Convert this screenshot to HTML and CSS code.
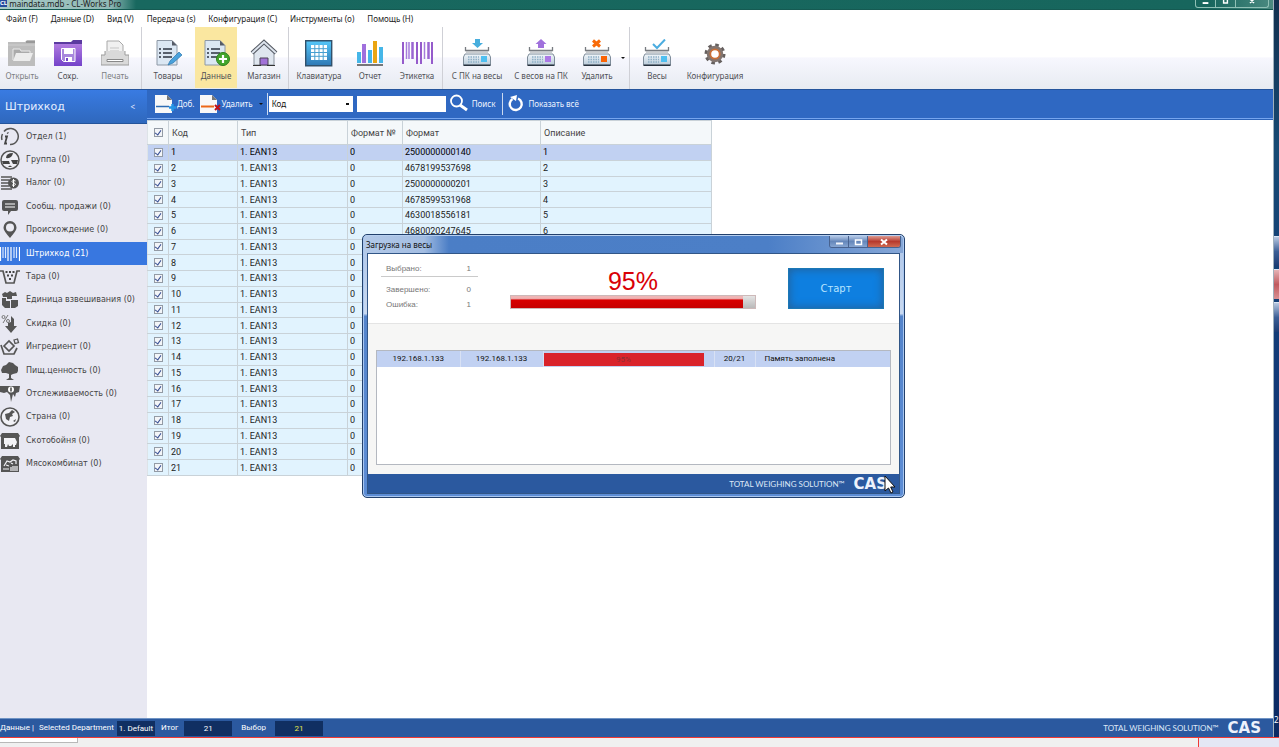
FILE: index.html
```html
<!DOCTYPE html>
<html lang="ru">
<head>
<meta charset="utf-8">
<title>maindata.mdb - CL-Works Pro</title>
<link rel="stylesheet" href="styles.css">
</head>
<body>
<svg class="defs" aria-hidden="true">
  <defs>
    <linearGradient id="g-purple" x1="0" y1="0" x2="0" y2="1"><stop offset="0" stop-color="#b07be0"/><stop offset="1" stop-color="#7443c9"/></linearGradient>
    <linearGradient id="g-blue" x1="0" y1="0" x2="0" y2="1"><stop offset="0" stop-color="#56c8fa"/><stop offset="1" stop-color="#2f78b4"/></linearGradient>
    <linearGradient id="g-body" x1="0" y1="0" x2="0" y2="1"><stop offset="0" stop-color="#f2f7fb"/><stop offset="1" stop-color="#b9cad8"/></linearGradient>
    <symbol id="sheet" viewBox="0 0 28 28">
      <path d="M3 1.500h15l5 5V26H3z" fill="#dbe7f3" stroke="#8d98a5"/>
      <path d="M18 1.500v5h5z" fill="#555b66"/>
      <path d="M5 10h2m2 0h9M5 14h2m2 0h9M5 18h2m2 0h9" stroke="#2c3542" stroke-width="1.500"/>
    </symbol>
    <symbol id="scale" viewBox="0 0 28 28">
      <path d="M2.500 8v3.500h23V8" fill="none" stroke="#777b80" stroke-width="1.300"/>
      <path d="M3 13h22" stroke="#b9bcc0" stroke-width="1.500"/>
      <path d="M2 15h24l1.500 3v8H.500v-8z" fill="url(#g-body)" stroke="#7f8d9a"/>
      <path d="M.500 26.300h27" stroke="#26303c" stroke-width="1.400"/>
      <path d="M5 18h11M5 20.500h11M5 23h11" stroke="#8fb0c6" stroke-width="1.600" stroke-dasharray="1.500 1"/>
    </symbol>
  </defs>
</svg>

<div class="desktop">
  <div class="app">
    <header class="titlebar">
      <span class="app-icon">CL</span>
      <span class="title">maindata.mdb - CL-Works Pro</span>
      <div class="win-controls">
        <button aria-label="Свернуть"><svg viewBox="0 0 20 8"><path d="M7 3h6" stroke="#fff" stroke-width="2"/></svg></button>
        <button aria-label="Развернуть"><svg viewBox="0 0 20 8"><path d="M8-2h4v5H8z" fill="none" stroke="#fff" stroke-width="1.500"/></svg></button>
        <button class="wide" aria-label="Закрыть"><svg viewBox="0 0 20 8"><path d="M8 3l4-4m0 4L8-1" stroke="#fff" stroke-width="1.500"/></svg></button>
      </div>
    </header>

    <nav class="menu">
      <button>Файл (F)</button><button>Данные (D)</button><button>Вид (V)</button><button>Передача (s)</button><button>Конфигурация (C)</button><button>Инструменты (o)</button><button>Помощь (H)</button>
    </nav>

    <div class="ribbon">
      <div class="group g-file">
        <button><svg viewBox="0 0 28 28"><path d="M0 3h17l2-2h8v26H0z" fill="#bdbdbd"/><path d="M18 2h9v2h-9z" fill="#999"/><path d="M0 6h27" stroke="#cfcfcf"/><path d="M5 21V10h7l1 2h9v3" fill="#aaa" stroke="#e9e9e9"/><path d="M8 14h17l-3 8H5z" fill="#ececec"/></svg>Открыть</button>
        <button class="on-text"><svg viewBox="0 0 28 28"><path d="M0 3h17l2-2h9v4H0z" fill="#5b3aa0"/><path d="M0 5h28v22H0z" fill="url(#g-purple)"/><path d="M7.500 9.500H21V22.500H9.500l-2-2z" fill="#a887dd" stroke="#fff"/><path d="M10 10h9v5h-9z" fill="#fff"/><path d="M11 18h7v4h-7z" fill="#fff"/><path d="M12 19h2v3h-2z" fill="#7443c9"/></svg>Сохр.</button>
        <button><svg viewBox="0 0 28 28"><path d="M6 16V2h12l4 4v10z" fill="#f0f0f0" stroke="#a8a8a8"/><path d="M9 9h9M9 12h9" stroke="#c5c5c5"/><path d="M4 12v4H0v10h28V16h-4v-4" fill="#d9d9d9" stroke="#9c9c9c"/><path d="M6 20.500h16v2H6z" fill="#fff" stroke="#888"/></svg>Печать</button>
      </div>
      <div class="group g-data">
        <button class="on-text"><svg viewBox="0 0 28 28"><use href="#sheet"/><path d="M14 26l2-4 9-9 3 3-9 8z" fill="#4aa2dc" stroke="#2c77ad" stroke-width=".700"/></svg>Товары</button>
        <button class="on-text active"><svg viewBox="0 0 28 28"><use href="#sheet"/><circle cx="21" cy="20" r="6.500" fill="#43a52c" stroke="#2d7f1c"/><path d="M21 16v8M17 20h8" stroke="#fff" stroke-width="2.200"/></svg>Данные</button>
        <button class="on-text"><svg viewBox="0 0 28 28"><path d="M4 13L14 4l10 9v13H4z" fill="#dfe6ef" stroke="#8a929d"/><path d="M2 14L14 3l12 11" fill="none" stroke="#545962" stroke-width="4"/><path d="M2 14L14 3l12 11" fill="none" stroke="#dde4ed" stroke-width="2"/><path d="M10 26v-7h8v7z" fill="#a272d8" stroke="#4a4355"/><path d="M3 26.500h8m6 0h8" stroke="#333"/></svg>Магазин</button>
      </div>
      <div class="group g-view">
        <button class="on-text"><svg viewBox="0 0 28 28"><path d="M.700 1.700h26v25H.700z" fill="url(#g-blue)" stroke="#31516b" stroke-width="1.400"/><path d="M6 6h16v15H6z" fill="#fff"/><path d="M9.800 6v15M14 6v15M18.200 6v15M6 9.700h16M6 13.500h16M6 17.300h16" stroke="#479fd0"/></svg>Клавиатура</button>
        <button class="on-text"><svg viewBox="0 0 28 28"><path d="M1 13h4v11H1z" fill="#45b6e8"/><path d="M6 5h4v19H6z" fill="#a070dd"/><path d="M12 11h4v13h-4z" fill="#45b6e8"/><path d="M17 2h4v22h-4z" fill="#eaa511"/><path d="M23 8h4v16h-4z" fill="#45b6e8"/><path d="M1 26h26" stroke="#222" stroke-width="1.200"/></svg>Отчет</button>
        <button class="on-text"><svg class="wide-icon" viewBox="0 0 31 28"><path d="M1 3v22M15 3v22M19 3v22M30 3v22" stroke="#955bcb" stroke-width="2"/><path d="M4.500 3v17M7 3v17M22.500 3v17" stroke="#a57bdb" stroke-width="1.500"/><path d="M10.500 3v17M26.500 3v17" stroke="#9a66d2" stroke-width="2.500"/></svg>Этикетка</button>
      </div>
      <div class="group g-send">
        <button class="on-text"><svg viewBox="0 0 28 28"><use href="#scale"/><path d="M12 0h5v4h3l-5.500 5L9 4h3z" fill="#48aedd"/><path d="M18 17h6v6h-6z" fill="#50bff0"/></svg>С ПК на весы</button>
        <button class="on-text"><svg viewBox="0 0 28 28"><use href="#scale"/><path d="M14 0l5.500 5H17v4h-6V5H8.500z" fill="#a071dc"/><path d="M18 17h6v6h-6z" fill="#ab78e5"/></svg>С весов на ПК</button>
        <button class="on-text"><svg viewBox="0 0 28 28"><use href="#scale"/><path d="M10 1.500l7 6m0-6l-7 6" stroke="#f86a08" stroke-width="3"/><path d="M18 17h6v6h-6z" fill="#fa6406"/></svg>Удалить</button>
        <button class="caret" aria-label="Варианты удаления"></button>
      </div>
      <div class="group g-conf">
        <button class="on-text"><svg viewBox="0 0 28 28"><use href="#scale"/><path d="M10 5l4 4L22 .500" fill="none" stroke="#4cade0" stroke-width="2"/><path d="M18 17h6v6h-6z" fill="#50bff0"/></svg>Весы</button>
        <button class="on-text"><svg viewBox="0 0 28 28"><circle cx="14" cy="15" r="9" fill="none" stroke="#65605f" stroke-width="3" stroke-dasharray="3.530"/><circle cx="14" cy="15" r="6" fill="#fff" stroke="#827570" stroke-width="4.500"/><circle cx="14" cy="15" r="4.700" fill="#fff" stroke="#c96f38" stroke-width="1.800"/></svg>Конфигурация</button>
      </div>
    </div>

    <div class="work">
      <aside class="sidebar">
        <div class="side-head"><h1>Штрихкод</h1><button aria-label="Свернуть панель">&lt;</button></div>
        <ul class="side-list">
          <li><a href="#"><svg viewBox="0 0 20 20"><path d="M4 4.500A8 8 0 1 1 10 17.500M2.500 7a8 8 0 0 0-.500 6" fill="none" stroke="#555" stroke-width="1.500"/><path d="M5 9.500h2l-2 7h2M7.500 5.500l.500 1" fill="none" stroke="#444" stroke-width="1.800"/></svg>Отдел (1)</a></li>
          <li><a href="#"><svg viewBox="0 0 20 20"><circle cx="10" cy="10" r="9" fill="#eeeef4" stroke="#555" stroke-width="1.500"/><path d="M6 8q0-5 7-5-1 6-7 5zM2 11h7l1 3H3zM11 10h7l-1 4h-4zM8 17q2-3 4 0z" fill="#444"/></svg>Группа (0)</a></li>
          <li><a href="#"><svg viewBox="0 0 20 20"><path d="M1 4h11M1 7h8M1 10h8M1 13h8M1 16h11" stroke="#555" stroke-width="1.600"/><circle cx="13.500" cy="10" r="5.500" fill="#555"/><path d="M15.500 8q-3.500-1.500-3.500.500c0 1.500 3.500 1 3.500 3q-1 1.500-3.500.500M13.500 6v8" fill="none" stroke="#fff"/></svg>Налог (0)</a></li>
          <li><a href="#"><svg viewBox="0 0 20 20"><path d="M4 3h12q2 0 2 2v7q0 2-2 2h-5l-3 4v-4H4q-2 0-2-2V5q0-2 2-2z" fill="#555"/><path d="M5 7h10M5 10h10" stroke="#fff" stroke-width="1.200"/></svg>Сообщ. продажи (0)</a></li>
          <li><a href="#"><svg viewBox="0 0 20 20"><path d="M10 18C6 13 3.500 10.500 3.500 7.500a6.500 6.500 0 0 1 13 0C16.500 10.500 14 13 10 18z" fill="#555"/><circle cx="10" cy="7.500" r="4" fill="#ebebf3"/></svg>Происхождение (0)</a></li>
          <li><a href="#" class="current" aria-current="page"><svg viewBox="0 0 20 20"><path d="M.500 3v14M8 3v14M11 3v14M19.500 3v14" stroke="#fff" stroke-width="1.200"/><path d="M3 3v11M5.500 3v11M14 3v11M16.500 3v11" stroke="#dce9ff" stroke-width="1.200"/></svg>Штрихкод (21)</a></li>
          <li><a href="#"><svg viewBox="0 0 20 20"><path d="M0 4h3l3 12h8l3-12h3" fill="none" stroke="#555" stroke-width="1.700"/><path d="M5.500 5h2m1.500 0h2m1.500 0h2M7 8.500h2m2 0h2M9 12h2" stroke="#444" stroke-width="2"/></svg>Тара (0)</a></li>
          <li><a href="#"><svg viewBox="0 0 20 20"><path d="M2 4l3-2 2 1 3-2 3 2 3-1 1 4h-5v3H7V7H3z" fill="#555"/><path d="M2 8h4v3h4v7H5l-3-3z" fill="#555"/><path d="M11 10h7v6l-3 2h-4z" fill="#555"/></svg>Единица взвешивания (0)</a></li>
          <li><a href="#"><svg viewBox="0 0 20 20"><circle cx="3.500" cy="3" r="1.500" fill="none" stroke="#777"/><circle cx="8" cy="7" r="1.500" fill="none" stroke="#777"/><path d="M8 1L3 9" stroke="#777"/><path d="M5 12h3V9l3-1V2l3 3v7h3l-6 7z" fill="#555"/></svg>Скидка (0)</a></li>
          <li><a href="#"><svg viewBox="0 0 20 20"><path d="M1 8l3 9h10l3-6M4 9l5-5 5 5-5 5z" fill="none" stroke="#555" stroke-width="1.700"/><path d="M14 3l3.500-1 1 3.500-3.500 1z" fill="none" stroke="#555" stroke-width="1.300"/></svg>Ингредиент (0)</a></li>
          <li><a href="#"><svg viewBox="0 0 20 20"><path d="M1 9l2-4 3-1 3-3 4 1 2 2 3 2v4l-1 2-4 1-2 1v3l3 2H6l3-2v-4l-3-1-4 0z" fill="#555"/></svg>Пищ.ценность (0)</a></li>
          <li><a href="#"><svg viewBox="0 0 20 20"><path d="M0 2h20l-1 6-3 1-1 4-2-3-2 8-1-7-3-3-3 1-4-1z" fill="#555"/><circle cx="11" cy="5.500" r="3" fill="#fff"/><path d="M11 3.500v4" stroke="#444" stroke-width="1.500"/></svg>Отслеживаемость (0)</a></li>
          <li><a href="#"><svg viewBox="0 0 20 20"><circle cx="10" cy="10" r="9" fill="#f1f1f6" stroke="#555" stroke-width="1.600"/><path d="M5 7l4-1 3-3 3 2-3 2 1 2-3 1-1 4-3-2zM13 14l3-2-1 3z" fill="#555"/></svg>Страна (0)</a></li>
          <li><a href="#"><svg viewBox="0 0 20 20"><path d="M0 5l2-3h16l2 3-1 1v12H1V6z" fill="#555"/><path d="M4 7h11l2 4-1 3h-1v2h-2v-3l-2 2H9l-1-2-1 3H5v-3H4z" fill="#f3f3f7"/></svg>Скотобойня (0)</a></li>
          <li><a href="#"><svg viewBox="0 0 20 20"><path d="M0 5l2-3h16l2 3-1 1v12H1V6z" fill="#555"/><path d="M4 12l3-5 3 1 3-2 3 1v3M3 15h6m2-2v4m2-5v5m2-5v5m2-5v5M6 11l3 1m2-3l2 1" fill="none" stroke="#f3f3f7" stroke-width="1.200"/></svg>Мясокомбинат (0)</a></li>
        </ul>
      </aside>

      <main class="main">
        <div class="toolbar">
          <button class="tool"><svg viewBox="0 0 22 20"><path d="M1 1h12l5 5v13H1z" fill="#f8f8f8"/><path d="M13 1v5h5z" fill="#777"/><path d="M2 12.500h13" stroke="#2f6cb3" stroke-width="1.500"/><path d="M18.500 10v7m-3.500-3.500h7" stroke="#2495e6" stroke-width="2.500"/></svg>Доб.</button>
          <button class="tool"><svg viewBox="0 0 22 20"><path d="M1 1h12l5 5v13H1z" fill="#f8f8f8"/><path d="M13 1v5h5z" fill="#777"/><path d="M2 12.500h13" stroke="#ed6818" stroke-width="2"/><path d="M16 11l5 5m0-5l-5 5" stroke="#bd0e18" stroke-width="2"/></svg>Удалить<span class="arrow"></span></button>
          <span class="divider"></span>
          <select aria-label="Поле поиска"><option>Код</option></select>
          <input class="search" type="text" aria-label="Строка поиска">
          <button class="tool find"><svg viewBox="0 0 20 20"><circle cx="7.500" cy="7" r="5.500" fill="none" stroke="#fff" stroke-width="1.800"/><path d="M11 11l7 5" stroke="#fff" stroke-width="3"/></svg>Поиск</button>
          <span class="divider"></span>
          <button class="tool all"><svg viewBox="0 0 18 20"><path d="M11 4.500a6 6 0 1 1-5.500.500" fill="none" stroke="#fff" stroke-width="2.400"/><path d="M3 3l7-2-1 6z" fill="#fff"/></svg>Показать всё</button>
        </div>

        <table class="grid">
          <colgroup><col class="c-check"><col class="c-code"><col class="c-type"><col class="c-num"><col class="c-format"><col class="c-desc"></colgroup>
          <thead><tr><th><input type="checkbox" checked aria-label="Выбрать все"></th><th>Код</th><th>Тип</th><th>Формат №</th><th>Формат</th><th>Описание</th></tr></thead>
          <tbody>
            <tr class="selected"><td><input type="checkbox" checked aria-label="Строка 1"></td><td>1</td><td>1. EAN13</td><td>0</td><td>2500000000140</td><td>1</td></tr>
            <tr><td><input type="checkbox" checked aria-label="Строка 2"></td><td>2</td><td>1. EAN13</td><td>0</td><td>4678199537698</td><td>2</td></tr>
            <tr><td><input type="checkbox" checked aria-label="Строка 3"></td><td>3</td><td>1. EAN13</td><td>0</td><td>2500000000201</td><td>3</td></tr>
            <tr><td><input type="checkbox" checked aria-label="Строка 4"></td><td>4</td><td>1. EAN13</td><td>0</td><td>4678599531968</td><td>4</td></tr>
            <tr><td><input type="checkbox" checked aria-label="Строка 5"></td><td>5</td><td>1. EAN13</td><td>0</td><td>4630018556181</td><td>5</td></tr>
            <tr><td><input type="checkbox" checked aria-label="Строка 6"></td><td>6</td><td>1. EAN13</td><td>0</td><td>4680020247645</td><td>6</td></tr>
            <tr><td><input type="checkbox" checked aria-label="Строка 7"></td><td>7</td><td>1. EAN13</td><td>0</td><td></td><td></td></tr>
            <tr><td><input type="checkbox" checked aria-label="Строка 8"></td><td>8</td><td>1. EAN13</td><td>0</td><td></td><td></td></tr>
            <tr><td><input type="checkbox" checked aria-label="Строка 9"></td><td>9</td><td>1. EAN13</td><td>0</td><td></td><td></td></tr>
            <tr><td><input type="checkbox" checked aria-label="Строка 10"></td><td>10</td><td>1. EAN13</td><td>0</td><td></td><td></td></tr>
            <tr><td><input type="checkbox" checked aria-label="Строка 11"></td><td>11</td><td>1. EAN13</td><td>0</td><td></td><td></td></tr>
            <tr><td><input type="checkbox" checked aria-label="Строка 12"></td><td>12</td><td>1. EAN13</td><td>0</td><td></td><td></td></tr>
            <tr><td><input type="checkbox" checked aria-label="Строка 13"></td><td>13</td><td>1. EAN13</td><td>0</td><td></td><td></td></tr>
            <tr><td><input type="checkbox" checked aria-label="Строка 14"></td><td>14</td><td>1. EAN13</td><td>0</td><td></td><td></td></tr>
            <tr><td><input type="checkbox" checked aria-label="Строка 15"></td><td>15</td><td>1. EAN13</td><td>0</td><td></td><td></td></tr>
            <tr><td><input type="checkbox" checked aria-label="Строка 16"></td><td>16</td><td>1. EAN13</td><td>0</td><td></td><td></td></tr>
            <tr><td><input type="checkbox" checked aria-label="Строка 17"></td><td>17</td><td>1. EAN13</td><td>0</td><td></td><td></td></tr>
            <tr><td><input type="checkbox" checked aria-label="Строка 18"></td><td>18</td><td>1. EAN13</td><td>0</td><td></td><td></td></tr>
            <tr><td><input type="checkbox" checked aria-label="Строка 19"></td><td>19</td><td>1. EAN13</td><td>0</td><td></td><td></td></tr>
            <tr><td><input type="checkbox" checked aria-label="Строка 20"></td><td>20</td><td>1. EAN13</td><td>0</td><td></td><td></td></tr>
            <tr><td><input type="checkbox" checked aria-label="Строка 21"></td><td>21</td><td>1. EAN13</td><td>0</td><td></td><td></td></tr>
          </tbody>
        </table>
      </main>
    </div>

    <footer class="status">
      <span>Данные |</span><span class="dept">Selected Department</span><span class="value">1. Default</span>
      <span class="label">Итог</span><span class="value box">21</span>
      <span class="label">Выбор</span><span class="value box yellow">21</span>
      <span class="slogan">TOTAL WEIGHING SOLUTION™</span><span class="brand">CAS</span>
    </footer>
  </div>
  <div class="side-desktop"><i></i><i class="red"></i><i></i><span>2</span></div>
</div>
<div class="taskbar"><span class="tab"></span><span class="tray"></span></div>

<section class="dialog" role="dialog" aria-labelledby="dlg-title">
  <header class="dlg-title">
    <h2 id="dlg-title">Загрузка на весы</h2>
    <div class="dlg-controls">
      <button aria-label="Свернуть"><svg viewBox="0 0 18 12"><path d="M6 7.500h7" stroke="#f3f6fb" stroke-width="2"/></svg></button>
      <button aria-label="Развернуть"><svg viewBox="0 0 18 12"><path d="M6.500 4h6v4.500h-6z" fill="none" stroke="#fff" stroke-width="1.500"/></svg></button>
      <button class="close" aria-label="Закрыть"><svg viewBox="0 0 18 12"><path d="M6 3.500l6 5m0-5l-6 5" stroke="#fff" stroke-width="2"/></svg></button>
    </div>
  </header>
  <div class="dlg-body">
    <div class="summary">
      <dl>
        <div class="first"><dt>Выбрано:</dt><dd>1</dd></div>
        <div><dt>Завершено:</dt><dd>0</dd></div>
        <div><dt>Ошибка:</dt><dd>1</dd></div>
      </dl>
      <div class="total"><strong>95%</strong><div class="bar"><div class="fill" style="width:95%"></div></div></div>
      <button class="start">Старт</button>
    </div>
    <div class="list">
      <table>
        <colgroup><col class="d-ip"><col class="d-ip"><col class="d-bar"><col class="d-count"><col></colgroup>
        <tbody><tr><td>192.168.1.133</td><td>192.168.1.133</td><td><div class="mini">95%</div></td><td>20/21</td><td class="msg">Память заполнена</td></tr></tbody>
      </table>
    </div>
    <footer class="dlg-foot"><span class="slogan">TOTAL WEIGHING SOLUTION™</span><span class="brand">CAS</span></footer>
  </div>
  <svg class="cursor" viewBox="0 0 12 19" aria-hidden="true"><path d="M1 1v15l3.500-3 2.500 5 2-1-2.300-5H11z" fill="#fff" stroke="#111"/></svg>
</section>
</body>
</html>
```

FILE: styles.css
```css
* { box-sizing: border-box; }
body {
  margin: 0;
  height: 100vh;
  display: flex;
  flex-direction: column;
  overflow: hidden;
  background: #fff;
  color: #222;
  font: 8px/12px "Noto Sans", "Open Sans", sans-serif;
}
button, input, select { font: inherit; color: inherit; }
button { padding: 0; border: 0; background: none; white-space: nowrap; }
h1, h2, ul, dl, dd { margin: 0; padding: 0; font-weight: normal; }
ul { list-style: none; }
.defs { position: absolute; width: 0; height: 0; }

.desktop { flex: 1; display: flex; min-height: 0; }
.app { flex: 1; min-width: 0; display: flex; flex-direction: column; border-right: 1px solid #9fb0bd; }

/* Window title */
.titlebar {
  flex: none;
  display: flex;
  align-items: flex-start;
  height: 10px;
  background: linear-gradient(90deg, #a9cbc8, #8fb9b5 110px, #18685f 136px, #17665d 95%, #4b8a81);
  border-bottom: 1px solid #155a52;
  line-height: 7px;
}
.app-icon { margin-right: 2px; background: #274da0; color: #fff; font-size: 6px; font-weight: bold; }
.win-controls { display: flex; margin: 0 4px 0 auto; height: 8px; border: 1px solid #8fc0b5; border-top: 0; border-radius: 0 0 3px 3px; }
.win-controls button { display: flex; width: 20px; justify-content: center; border-right: 1px solid #8fc0b5; }
.win-controls .wide { width: 32px; border: 0; }
.win-controls svg { width: 20px; height: 8px; }

.menu { flex: none; display: flex; gap: 13px; height: 17px; padding-left: 6px; background: #fff; }

/* Ribbon */
.ribbon { flex: none; display: flex; height: 62px; background: linear-gradient(#fff 48%, #f7f7fe 50%, #e7ebf1); color: #7d7f83; }
.group { display: grid; padding-bottom: 1px; }
.group + .group { border-left: 1px solid #cfd0d6; }
.group button { display: flex; flex-direction: column; align-items: center; gap: 3px; padding-top: 12px; }
.group svg { width: 28px; height: 28px; }
.group .wide-icon { width: 31px; }
.group .on-text { color: #4f5156; }
.group .active { background: #fae7a0; }
.g-file { grid-template-columns: 44px 48px 46px; width: 141px; }
.g-data { grid-template-columns: repeat(3, 42px); column-gap: 6px; width: 147px; padding-left: 5px; }
.g-view { grid-template-columns: 60px 42px 52px; width: 154px; }
.g-send { grid-template-columns: 64px 64px 48px 4px; width: 187px; padding-left: 2px; }
.g-conf { grid-template-columns: 50px 66px; padding-left: 2px; }
.group .caret { padding-top: 30px; }
.caret::before, .arrow { content: ""; border: 2px solid transparent; border-top-color: #111; border-bottom: 0; }

/* Work area */
.work { flex: 1; display: flex; min-height: 0; }
.sidebar { flex: none; width: 147px; background: #e8e8f2; }
.side-head {
  display: flex;
  align-items: center;
  justify-content: space-between;
  height: 35px;
  padding: 0 12px 0 5px;
  background: linear-gradient(#397be2, #2f68bd);
  border-top: 1px solid #24549b;
  border-bottom: 1px solid #24549b;
  color: #e4eeff;
}
.side-head h1 { font: 11px/16px "DejaVu Sans", sans-serif; }
.side-list { display: grid; grid-auto-rows: 1fr; height: 352px; padding-top: 1px; font-family: "DejaVu Sans", sans-serif; }
.side-list a { display: flex; align-items: center; gap: 6px; height: 100%; color: #444; text-decoration: none; white-space: nowrap; }
.side-list svg { flex: none; width: 20px; height: 20px; }
.side-list .current { background: #3877e0; color: #fff; }

.main { flex: 1; min-width: 0; background: #fff; }
.toolbar {
  display: flex;
  align-items: center;
  height: 31px;
  padding: 0 0 1px 7px;
  background: #2f68c2;
  border-top: 1px solid #24549b;
  border-bottom: 1px solid #2c63b8;
  box-shadow: inset 0 -1px #75a5ef;
  color: #eef4ff;
}
.tool { display: flex; align-items: center; gap: 1px; margin-right: 4px; }
.tool svg { width: 22px; height: 20px; }
.arrow { margin-left: 5px; }
.divider { width: 1px; height: 22px; background: #cbd9ef; }
.toolbar select {
  width: 84px;
  height: 16px;
  margin: 0 4px 0 1px;
  padding: 0 3px;
  appearance: none;
  border: 0;
  border-radius: 0;
  color: #111;
  background: #fff linear-gradient(#111, #111) no-repeat right 4px center / 3px 2px;
}
.search { width: 89px; height: 16px; padding: 0 3px; border: 0; color: #111; }
.find { margin: 0 7px 0 3px; gap: 3px; }
.find svg { width: 20px; }
.all { margin-left: 4px; gap: 3px; }
.all svg { width: 18px; }

.grid { width: 565px; height: 356px; table-layout: fixed; border-collapse: collapse; font: 9px/12px Roboto, "Liberation Sans", sans-serif; }
.c-check { width: 21px; }
.c-code { width: 69px; }
.c-type { width: 110px; }
.c-num { width: 55px; }
.c-format { width: 138px; }
.grid th { height: 24px; padding: 0 3px; background: #f4f8fa; font-weight: normal; text-align: left; color: #444; }
.grid th, .grid td { border: 1px solid #c9d2d8; border-left-color: #dde3e7; }
.grid td { padding: 0 2px; background: #e1f3fe; }
.grid .selected td { background: #c1d1f2; color: #000; }
.grid input {
  display: block;
  appearance: none;
  width: 9px;
  height: 9px;
  margin: 0 auto;
  border: 1px solid #939ba5;
  background: #f3f5f8;
}
.grid input::before { content: ""; display: block; width: 3px; height: 5px; margin: 0 auto; border: solid #354d93; border-width: 0 1px 1px 0; rotate: 35deg; }

/* Status bar */
.status { flex: none; display: flex; align-items: center; height: 19px; padding-right: 12px; background: #2b599f; border-top: 1px solid #6f93c4; color: #fff; font-family: Roboto, "Noto Sans", sans-serif; white-space: nowrap; }
.dept { margin: 0 3px 0 5px; }
.value { padding: 1px 2px; background: #102f62; line-height: 13px; }
.label { margin: 0 6px; }
.box { width: 48px; text-align: center; }
.box + .label { margin: 0 9px; }
.yellow { color: #e5e84a; }
.slogan { margin-left: auto; font: 8px/16px Lato, sans-serif; color: #dfe8f7; }
.brand { margin-left: 9px; font: bold 15px/16px "DejaVu Sans", sans-serif; color: #edf2fc; }

.side-desktop { flex: none; display: flex; flex-direction: column; gap: 3px; width: 5px; padding-top: 236px; background: linear-gradient(#12304f, #174a74 20%, #123a78 50%, #0b2a63); overflow: hidden; }
.side-desktop i { height: 30px; background: linear-gradient(#b9c9e2, #3c5f96 50%, #1d3d74); border-top: 1px solid #dce6f3; }
.side-desktop .red { background: linear-gradient(#e5b3b6, #c05a5f 50%, #da9093); }
.side-desktop span { margin-top: auto; margin-bottom: 11px; color: #fff; }
.taskbar { flex: none; display: flex; justify-content: space-between; height: 10px; background: #f0f0f0; border-top: 1px solid #f03a34; }
.tab { width: 78px; height: 5px; background: #fff; border: solid #b8b8b8; border-width: 0 1px 1px 0; }
.tray { width: 81px; background: #e4e7f5; border-left: 1px solid #f03a34; }

/* Upload window */
.dialog {
  position: absolute;
  left: 362px;
  top: 234px;
  width: 543px;
  padding: 0 4px 3px;
  border: 1px solid #22406c;
  border-radius: 5px;
  background: linear-gradient(#adc5e8 0, #c9d9f0 30%, #5484cb 31%, #5d8dd5);
  box-shadow: inset 0 0 0 1px #a9c7f0;
}
.dlg-title { display: flex; justify-content: space-between; height: 18px; margin: 0 -3px; padding: 0 2px; border-radius: 4px 4px 0 0; background: linear-gradient(90deg, #b3c9e8, #a3bde2 60px, #4b7ec6 85px, #4c7fc7 75%, #86a7d7); border-top: 1px solid #b7cfef; }
.dlg-title h2 { font-size: 8px; line-height: 17px; color: #111; }
.dlg-controls { display: flex; height: 12px; border: 1px solid #48628f; border-top: 0; border-radius: 0 0 3px 3px; overflow: hidden; }
.dlg-controls button { display: flex; justify-content: center; width: 19px; background: linear-gradient(#b4c8e6, #6587ba 50%, #86a5d2); border-right: 1px solid #48628f; }
.dlg-controls .close { width: 32px; border: 0; background: linear-gradient(#dc9a92, #b73a2d 50%, #cf6a52); }
.dlg-controls svg { width: 18px; height: 12px; }
.dlg-body { border: 1px solid #315687; background: #f6f6f5; }
.summary { display: grid; grid-template-columns: 97px 246px 96px; column-gap: 32px; height: 70px; padding: 7px 0 0 13px; background: #fff; border-bottom: 1px solid #e4e4e4; }
.summary dl { font: 8px/15px "Liberation Sans", sans-serif; color: #777; }
.summary dl div { display: flex; justify-content: space-between; padding: 0 7px 0 5px; }
.summary dl .first { height: 16px; margin-bottom: 5px; border-bottom: 1px solid #cacaca; }
.total { text-align: center; }
.total strong { display: block; height: 34px; padding-top: 4px; font: 25px/32px "Liberation Sans", sans-serif; color: #d90007; }
.bar { height: 14px; background: linear-gradient(#e4e4e4, #b9b9b9); border: 1px solid #cdb9b9; }
.fill { height: 100%; background: linear-gradient(#efb5b5 20%, #d80000 35%, #c60000); }
.start { height: 41px; margin-top: 7px; border: 1px solid #1b78b5; background: #0e7fe0; box-shadow: inset 0 0 10px #275f93; color: #b8e4ff; font: 10px/16px "DejaVu Sans", sans-serif; }
.list { height: 115px; margin: 26px 8px 9px; border: 1px solid #b4b8c0; background: #fff; }
.list table { width: 100%; table-layout: fixed; border-collapse: collapse; font: 8px/14px Roboto, "Liberation Sans", sans-serif; color: #111; }
.list td { height: 16px; padding: 0; background: #c1d1f2; border-right: 1px solid #d8e1f4; text-align: center; }
.list .msg { padding-left: 9px; text-align: left; border: 0; }
.d-ip { width: 83px; }
.d-bar { width: 171px; }
.d-count { width: 41px; }
.mini { width: 160px; height: 13px; background: #d9232b; color: #8a3035; line-height: 14px; }
.dlg-foot { display: flex; align-items: center; height: 19px; padding-right: 12px; background: #2b599f; }
.cursor { position: absolute; left: 521px; top: 240px; width: 12px; height: 19px; }
```
